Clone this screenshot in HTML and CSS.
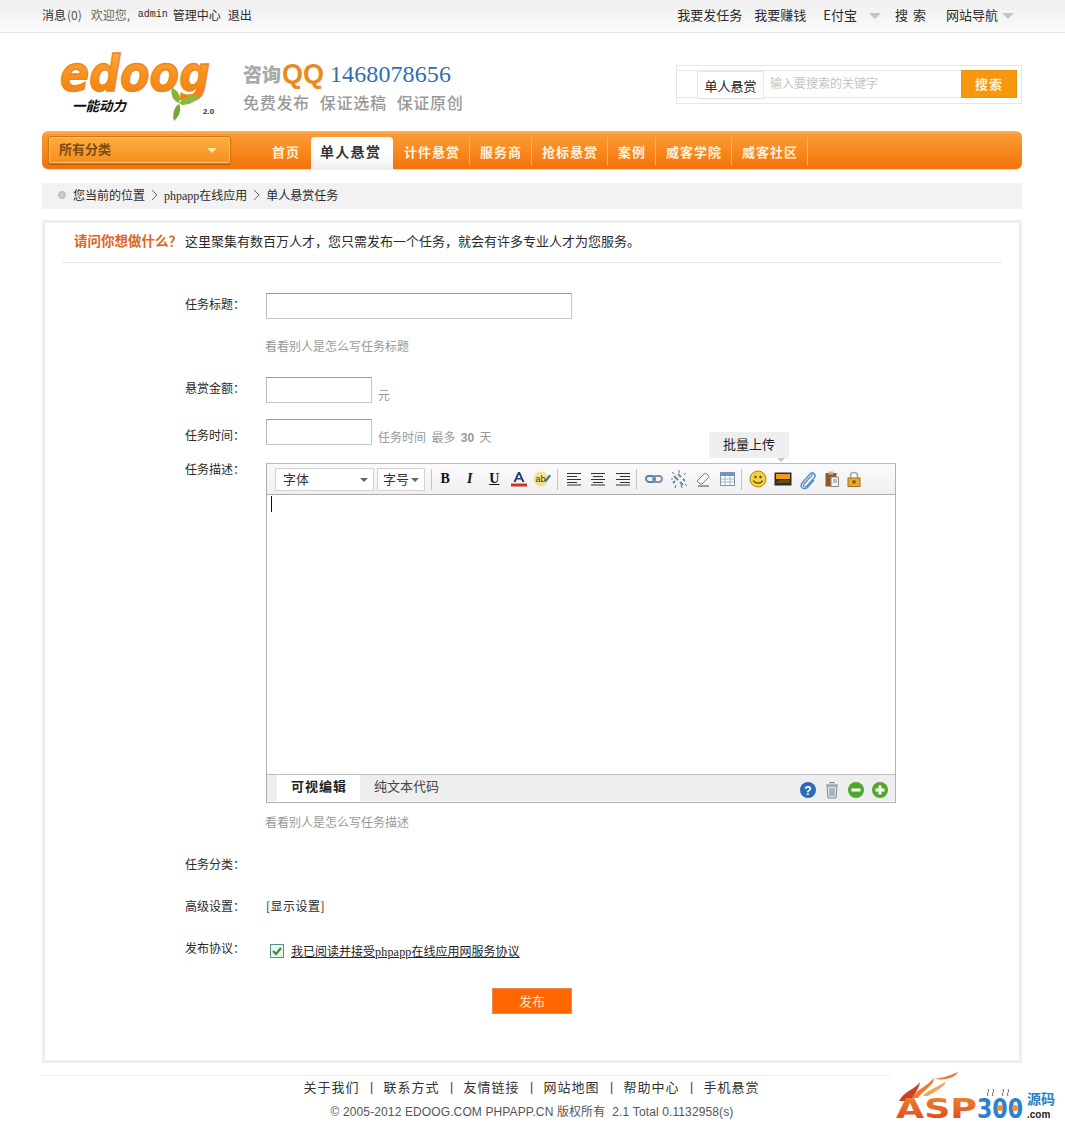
FILE: index.html
```html
<!DOCTYPE html>
<html lang="zh-CN">
<head>
<meta charset="utf-8">
<title>单人悬赏任务</title>
<link rel="stylesheet" href="styles.css">
</head>
<body>
<div class="topbar">
  <div class="wrap topbar-in">
    <div class="top-left">
      <a>消息</a><span class="num">(0)</span><span class="welcome">欢迎您,</span><span class="admin">admin</span><a>管理中心</a><a>退出</a>
    </div>
    <div class="top-right">
      <a class="t1">我要发任务</a><a class="t2">我要赚钱</a><a class="t3">E付宝</a><i class="tri t-a"></i><a class="t4">搜 索</a><a class="t5">网站导航</a><i class="tri t-b"></i>
    </div>
  </div>
</div>

<div class="wrap">
  <header class="header">
    <svg class="logo" width="166" height="72" viewBox="0 0 166 72" aria-label="edoog">
      <defs>
        <linearGradient id="lg" x1="0" y1="0" x2="0" y2="1">
          <stop offset="0" stop-color="#fdb04a"/>
          <stop offset=".55" stop-color="#f7901c"/>
          <stop offset="1" stop-color="#ef7c10"/>
        </linearGradient>
      </defs>
      <text x="1" y="41" class="logo-word" textLength="150" lengthAdjust="spacingAndGlyphs" fill="url(#lg)" stroke="#f0841a" stroke-width="1.400">edoog</text>
      <path d="M113 38c4 1 10 7 7 15-6-2-9-9-7-15z" fill="#82b33a"/>
      <path d="M120 53c5-6 12-8 20-8-2 6-9 10-17 10z" fill="#8abb42"/>
      <path d="M120 54c3 5 0 13-5 17-2-6 0-14 5-17z" fill="#74a632"/>
      <text x="13" y="61" class="logo-cn">一能动力</text>
      <text x="144" y="64" class="logo-ver">2.0</text>
    </svg>
    <div class="slogan">
      <div class="sl-1"><span class="sl-zx">咨询</span><span class="sl-qq">QQ</span><span class="sl-no">1468078656</span></div>
      <div class="sl-2"><span>免费发布</span><span>保证选稿</span><span>保证原创</span></div>
    </div>
    <div class="search">
      <div class="search-in">
        <span class="search-type">单人悬赏</span>
        <span class="search-input">输入要搜索的关键字</span>
        <span class="search-btn">搜索</span>
      </div>
    </div>
  </header>

  <nav class="nav">
    <div class="cat"><span>所有分类</span><i class="cat-arrow"></i></div>
    <ul class="menu">
      <li class="m-first"><a>首页</a></li>
      <li class="active"><a>单人悬赏</a></li>
      <li><a>计件悬赏</a></li>
      <li><a>服务商</a></li>
      <li><a>抢标悬赏</a></li>
      <li><a>案例</a></li>
      <li><a>威客学院</a></li>
      <li><a>威客社区</a></li>
    </ul>
  </nav>

  <div class="crumb">
    <i class="crumb-dot"></i><span class="crumb-0">您当前的位置</span>
    <svg class="crumb-sep" width="7" height="10" viewBox="0 0 7 10"><path d="M1 0l5 5-5 5" fill="none" stroke="#666"/></svg>
    <span><span class="mono">phpapp</span>在线应用</span>
    <svg class="crumb-sep" width="7" height="10" viewBox="0 0 7 10"><path d="M1 0l5 5-5 5" fill="none" stroke="#666"/></svg>
    <span>单人悬赏任务</span>
  </div>

  <main class="main">
    <div class="intro"><strong>请问你想做什么？</strong><span>这里聚集有数百万人才，您只需发布一个任务，就会有许多专业人才为您服务。</span></div>

    <div class="row row-title">
      <label class="lbl">任务标题：</label>
      <div class="input w-long"></div>
    </div>
    <div class="hint hint-1">看看别人是怎么写任务标题</div>

    <div class="row row-amount">
      <label class="lbl">悬赏金额：</label>
      <div class="input w-short"></div>
      <span class="after">元</span>
    </div>
    <div class="row row-time">
      <label class="lbl">任务时间：</label>
      <div class="input w-short"></div>
      <span class="after">任务时间&nbsp; 最多 &nbsp;<b class="num-b">30</b>&nbsp; 天</span>
    </div>

    <div class="row row-editor">
      <label class="lbl lbl-top">任务描述：</label>
      <div class="editor">
        <div class="tip">批量上传</div>
        <div class="toolbar">
          <div class="sel sel-font"><span>字体</span><i class="sel-arrow"></i></div>
          <div class="sel sel-size"><span>字号</span><i class="sel-arrow"></i></div>
          <i class="tb-sep tb-sep-1"></i>
          <span class="tb"><b class="tb-b">B</b></span>
          <span class="tb"><b class="tb-i">I</b></span>
          <span class="tb"><b class="tb-u">U</b></span>
          <span class="tb"><svg width="18" height="18" viewBox="0 0 18 18"><path d="M3.5 12L8 2h2l4.500 10h-2.200l-1-2.500H6.700l-1 2.500zM7.400 8h3.200L9 4.200z" fill="#1c3f78"/><rect x="1" y="13.500" width="16" height="3" fill="#d8311e"/></svg></span>
          <span class="tb"><svg width="20" height="18" viewBox="0 0 20 18"><circle cx="8" cy="9" r="7.500" fill="#f3e28a"/><text x="2.500" y="12" class="tb-ab">ab</text><path d="M13 12l5-6-1.500-1.500-5 6z" fill="#3a6ea5"/></svg></span>
          <i class="tb-sep"></i>
          <span class="tb"><svg width="16" height="14" viewBox="0 0 16 14"><path d="M1 1.500h14M1 4.500h10M1 7.500h14M1 10.500h10M1 13h14" stroke="#333"/></svg></span>
          <span class="tb"><svg width="16" height="14" viewBox="0 0 16 14"><path d="M1 1.500h14M3 4.500h10M1 7.500h14M3 10.500h10M1 13h14" stroke="#333"/></svg></span>
          <span class="tb"><svg width="16" height="14" viewBox="0 0 16 14"><path d="M1 1.500h14M5 4.500h10M1 7.500h14M5 10.500h10M1 13h14" stroke="#333"/></svg></span>
          <i class="tb-sep tb-sep-w"></i>
          <span class="tb"><svg width="18" height="12" viewBox="0 0 18 12"><rect x="1" y="3" width="9" height="6" rx="3" fill="none" stroke="#5d7fa8" stroke-width="1.800"/><rect x="8" y="3" width="9" height="6" rx="3" fill="none" stroke="#7d93ad" stroke-width="1.800"/></svg></span>
          <span class="tb"><svg width="18" height="18" viewBox="0 0 18 18"><path d="M4 6l4 4M10 12l3 3" stroke="#6d87a8" stroke-width="2.200" fill="none"/><path d="M8 4l3 3M13 9l2 2M5 11l-2 2" stroke="#6d87a8" stroke-width="1.800"/><path d="M9 0v3M2 2l2 2M16 3l-2 2M1 9h2M15 14l2 2M6 15l-1 3M11 15l1 3" stroke="#555" stroke-width=".8"/></svg></span>
          <span class="tb"><svg width="16" height="16" viewBox="0 0 16 16"><path d="M2 10l7-7c1-1 2-1 3 0l1 1c1 1 1 2 0 3l-6 6H5z" fill="#f4f6f8" stroke="#6a7c90"/><path d="M3 15h11" stroke="#445"/></svg></span>
          <span class="tb"><svg width="15" height="14" viewBox="0 0 15 14"><rect x=".5" y=".5" width="14" height="13" fill="#fff" stroke="#7b97b8"/><rect x="1" y="1" width="13" height="3" fill="#6d96c6"/><path d="M5 4v9M10 4v9M1 7h13M1 10h13" stroke="#9fb8d4"/></svg></span>
          <i class="tb-sep"></i>
          <span class="tb"><svg width="18" height="18" viewBox="0 0 18 18"><circle cx="9" cy="9" r="8" fill="#f5d23c" stroke="#a98a1e"/><circle cx="6.500" cy="7" r="1.200" fill="#5c4a10"/><circle cx="11.500" cy="7" r="1.200" fill="#5c4a10"/><path d="M4.500 10.500c1.500 3.500 7.500 3.500 9 0" fill="none" stroke="#5c4a10" stroke-width="1.200"/></svg></span>
          <span class="tb"><svg width="18" height="14" viewBox="0 0 18 14"><rect x=".5" y=".5" width="17" height="13" fill="#2c2c2c"/><rect x="2" y="2" width="14" height="5" fill="#f59a1e"/><path d="M2 10c4-3 9-3 14-2v3H2z" fill="#6b4a16"/></svg></span>
          <span class="tb"><svg width="18" height="20" viewBox="0 0 18 20"><path d="M15 5L6 15c-2 2 1 4 3 2l7-8c3-3-1-7-4-4l-8 9c-3 4 2 8 6 4l6-7" fill="none" stroke="#5d8fc6" stroke-width="1.400"/></svg></span>
          <span class="tb"><svg width="14" height="16" viewBox="0 0 14 16"><rect x=".5" y="2" width="11" height="13.500" fill="#8a5a2c"/><rect x="3.500" y=".5" width="5" height="3" fill="#c9b28a"/><path d="M6 6h7.500v9.500H6z" fill="#f3f3f3" stroke="#888"/><path d="M8 9h4M8 11h4" stroke="#888"/></svg></span>
          <span class="tb tb-lock"><svg width="14" height="16" viewBox="0 0 14 16"><path d="M3.500 7V4.500c0-4 7-4 7 0V7" fill="none" stroke="#a8a8a0" stroke-width="1.600"/><rect x="1" y="7" width="12" height="8.500" fill="#e8a83a" stroke="#a66f1a"/><rect x="5.500" y="9.500" width="3" height="3" fill="#7a4e10"/></svg></span>
        </div>
        <div class="edit-area"><i class="caret"></i></div>
        <div class="edit-bottom">
          <div class="tabs"><span class="tab tab-on">可视编辑</span><span class="tab">纯文本代码</span></div>
          <div class="ed-icons">
            <svg width="16" height="16" viewBox="0 0 16 16"><circle cx="8" cy="8" r="8" fill="#2a6cb8"/><text x="8" y="12.500" class="ic-q">?</text></svg>
            <svg class="ic-trash" width="14" height="18" viewBox="0 0 14 18"><path d="M1 4h12M5 3V1.500h4V3" fill="none" stroke="#7b8894"/><path d="M2 5h10l-1 12H3z" fill="#dde3e8" stroke="#7b8894"/><path d="M5 7l.3 8M7 7v8M9 7l-.3 8" stroke="#7b8894"/></svg>
            <svg width="16" height="16" viewBox="0 0 16 16"><circle cx="8" cy="8" r="8" fill="#4fa82c"/><rect x="3.500" y="6.500" width="9" height="3" fill="#fff"/></svg>
            <svg width="16" height="16" viewBox="0 0 16 16"><circle cx="8" cy="8" r="8" fill="#4fa82c"/><path d="M3.500 6.500h3v-3h3v3h3v3h-3v3h-3v-3h-3z" fill="#fff"/></svg>
          </div>
        </div>
      </div>
    </div>
    <div class="hint hint-2">看看别人是怎么写任务描述</div>

    <div class="row row-cat"><label class="lbl">任务分类：</label></div>
    <div class="row row-adv"><label class="lbl">高级设置：</label><span class="adv">[显示设置]</span></div>
    <div class="row row-agree">
      <label class="lbl">发布协议：</label>
      <div class="agree">
        <svg class="check" width="14" height="14" viewBox="0 0 14 14"><rect x=".5" y=".5" width="13" height="13" fill="#e8f2ee" stroke="#5b8f8a"/><path d="M3 7l3 3 5-6" fill="none" stroke="#2f8f2f" stroke-width="2"/></svg>
        <a>我已阅读并接受<span class="mono">phpapp</span>在线应用网服务协议</a>
      </div>
    </div>
    <div class="submit-row"><span class="submit">发布</span></div>
  </main>

  <footer class="footer">
    <div class="f-links"><a>关于我们</a><i>|</i><a>联系方式</a><i>|</i><a>友情链接</a><i>|</i><a>网站地图</a><i>|</i><a>帮助中心</a><i>|</i><a>手机悬赏</a></div>
    <div class="f-copy">© 2005-2012 EDOOG.COM PHPAPP.CN 版权所有 &nbsp;2.1 Total 0.1132958(s)</div>
  </footer>
</div>

<svg class="asp" width="175" height="53" viewBox="0 0 175 53" aria-label="ASP300">
  <defs>
    <linearGradient id="ag" x1="0" y1="0" x2="0" y2="1">
      <stop offset="0" stop-color="#f08a30"/>
      <stop offset="1" stop-color="#e0401c"/>
    </linearGradient>
  </defs>
  <path d="M9 30c5-10 15-11 21-19-1 7-6 12-9 19z" fill="#c9402a"/>
  <path d="M22 27c5-9 14-11 22-20 0 8-11 12-16 20z" fill="#ee7d34"/>
  <path d="M33 25c6-7 15-9 22-14 2 3-9 9-17 14z" fill="#f4a35a"/>
  <path d="M44 8c8-1 14-3 24-7-1 4-10 9-24 7z" fill="#ee7a34"/>
  <path d="M98 25c-2-3 2-4 0-7M103 25c-2-3 2-4 0-7M113 25c-2-3 2-4 0-7M118 25c-2-3 2-4 0-7" fill="none" stroke="#667" stroke-width="1"/>
  <text x="6" y="47" class="asp-a" textLength="81" lengthAdjust="spacingAndGlyphs">ASP</text>
  <text x="87" y="47" class="asp-b" textLength="46" lengthAdjust="spacingAndGlyphs">300</text>
  <circle cx="110" cy="37" r="3" fill="#f09030"/>
  <circle cx="125" cy="37" r="3" fill="#f09030"/>
  <text x="137" y="33" class="asp-c">源码</text>
  <text x="137" y="47" class="asp-d">.com</text>
</svg>
</body>
</html>
```

FILE: styles.css
```css
* { box-sizing: border-box; }
html, body { margin: 0; padding: 0; background: #fff; overflow: hidden; }
body {
  position: relative;
  height: 1124px;
  font: 12px/1.5 "Noto Sans CJK SC", "Liberation Sans", sans-serif;
  color: #2a2a2a;
}
i { font-style: normal; display: block; }
svg { overflow: visible; }
.wrap { width: 980px; margin-left: 42px; }
.mono { font-family: "Liberation Serif", serif; font-size: 12px; }

/* top bar */
.topbar {
  height: 33px;
  background: linear-gradient(#eeeeee, #fbfbfb);
  border-bottom: 1px solid #e2e2e2;
}
.topbar-in { display: flex; justify-content: space-between; height: 32px; line-height: 29px; }
.top-left { display: flex; }
.top-left .num { margin: 0 9px 0 1px; color: #555; }
.top-left .welcome { color: #666; width: 47px; }
.top-left .admin { font-family: "Liberation Mono", monospace; font-size: 10px; width: 35px; }
.top-left a + a { margin-left: 7px; }
.top-right { display: flex; align-items: center; font-size: 13px; padding-right: 8px; height: 29px; }
.top-right .t2 { margin-left: 12px; }
.top-right .t3 { margin-left: 17px; }
.top-right .t4 { margin-left: 14px; letter-spacing: 1px; width: 33px; white-space: nowrap; }
.top-right .t5 { margin-left: 18px; }
.tri { width: 0; height: 0; border: 5px solid transparent; border-top: 6px solid #bcc4cc; border-bottom: 0; margin-top: 2px; }
.t-a { margin-left: 12px; border-left-width: 6px; border-right-width: 6px; }
.t-b { margin-left: 4px; border-left-width: 6px; border-right-width: 6px; }

/* header */
.header { display: flex; height: 98px; position: relative; }
.logo { margin: 17px 0 0 17px; flex: none; }
.logo-word { font: oblique 700 50px "DejaVu Sans", sans-serif; }
.logo-cn { font: italic 700 13.500px "Noto Sans CJK SC", sans-serif; fill: #111; }
.logo-ver { font: 700 8px "Liberation Sans", sans-serif; fill: #333; }
.slogan { margin: 27px 0 0 18px; width: 260px; }
.sl-1 { display: flex; align-items: center; height: 28px; }
.sl-zx { font-size: 19px; font-weight: 900; color: #a9a9a9; }
.sl-qq { font: 700 27px "Liberation Sans", sans-serif; color: #ec8a20; margin: 0 6px 0 1px; width: 42px; }
.sl-no { font: 24px "Liberation Serif", serif; color: #2f6db3; letter-spacing: .1px; }
.sl-2 { display: flex; gap: 10px; font-size: 16px; color: #999; margin-top: 1px; font-weight: 500; letter-spacing: .7px; line-height: 26px; }
.search {
  position: absolute; right: 0; top: 32px;
  width: 346px; height: 39px;
  border: 1px solid #e6e6e6;
  padding: 4px 4px 4px 0;
}
.search-in { display: flex; height: 28px; border-top: 1px solid #e8e8e8; border-bottom: 1px solid #e8e8e8; }
.search-type {
  margin-left: 20px; width: 67px; height: 28px; background: #fff;
  border: 1px solid #e8e8e8; border-bottom-color: #ddd; line-height: 28px; text-align: center; color: #222; font-size: 13px;
}
.search-input { flex: 1; padding-left: 6px; color: #c4c4c4; line-height: 24px; }
.search-btn { width: 56px; margin-top: -1px; height: 28px; background: #f7960f; border: 1px solid #e6930f; color: #fff3d6; font-size: 13px; font-weight: 700; text-align: center; line-height: 26px; letter-spacing: 1px; }

/* nav */
.nav {
  height: 38px;
  display: flex;
  border-radius: 6px;
  background: linear-gradient(#fdb968 0, #fb9a38 3px, #f78a20 50%, #f2720d 100%);
  box-shadow: 0 1px 0 #d9e8ec;
  padding-left: 6px;
}
.cat {
  width: 183px; height: 28px; margin-top: 5px;
  display: flex; justify-content: space-between; align-items: center;
  padding: 0 13px 2px 10px;
  border: 1px solid #d0780f;
  border-radius: 3px;
  background: linear-gradient(#fcae44, #f68d1c);
  box-shadow: 0 1px 1px #b85c08, inset 0 0 0 1px #fcc26e;
  font-weight: 700; font-size: 13px; color: #7c4a10;
}
.cat-arrow { width: 0; height: 0; border: 5px solid transparent; border-top: 5px solid #ffe3a8; border-bottom: 0; margin-top: 2px; }
.menu { list-style: none; display: flex; margin: 0; padding: 0 0 0 30px; height: 38px; }
.menu li { position: relative; }
.menu a {
  display: block; margin-top: 6px; height: 28px;
  padding: 0 9px 0 10px; line-height: 30px;
  font-size: 13px; font-weight: 700; letter-spacing: 1px; color: #fff2dc;
  border-right: 1px solid #fbb56c;
  white-space: nowrap;
}
.menu .m-first a { padding: 0 11px 0 11px; border-right: 0; }
.menu .active { margin: 6px 1px -1px 0; height: 33px; width: 82px; background: linear-gradient(#fff 50%, #eee); border-radius: 4px 4px 0 0; }
.menu .active a { margin: 0; padding: 0 0 0 9px; border: 0; color: #333; font-size: 14px; height: 33px; line-height: 29px; letter-spacing: 1.300px; }

/* breadcrumb */
.crumb {
  margin-top: 14px; height: 26px;
  display: flex; align-items: center;
  background: #f2f2f2;
  padding: 0 0 2px 16px;
}
.crumb-dot { width: 8px; height: 8px; border-radius: 50%; background: #c9c9c9; border: 1px solid #b8b8b8; margin-right: 7px; }
.crumb-sep { margin: 0 6px; }

/* main box */
.main { margin-top: 11px; border: 3px solid #eeeeee; height: 843px; }
.intro {
  margin: 0 17px; height: 40px; padding: 7px 0 0 12px;
  border-bottom: 1px solid #e6e6e6;
  font-size: 13px; line-height: 20px; white-space: nowrap;
}
.intro strong { color: #e0651a; font-size: 13.500px; margin-right: 3px; font-family: "Noto Sans CJK TC", "Noto Sans CJK SC", sans-serif; }
.row { display: flex; padding-left: 140px; }
.lbl { width: 81px; flex: none; line-height: 22px; white-space: nowrap; font-family: "Noto Sans CJK TC", "Noto Sans CJK SC", sans-serif; }
.lbl-top { line-height: 11px; }
.input { height: 26px; background: #fff; border: 1px solid #c6c6c6; border-top-color: #999; border-left-color: #bbb; }
.w-long { width: 306px; }
.w-short { width: 106px; }
.after { margin: 7px 0 -3px 6px; height: 22px; color: #999; line-height: 22px; white-space: nowrap; }
.num-b { font-family: "Liberation Sans", sans-serif; }
.hint { padding-left: 220px; color: #999; line-height: 20px; }
.row-title { margin-top: 30px; }
.hint-1 { margin-top: 17px; }
.row-amount { margin-top: 21px; height: 26px; }
.row-time { margin-top: 16px; height: 26px; }
.row-time .lbl { padding-top: 5px; }
.row-editor { margin-top: 18px; }
.hint-2 { margin-top: 9px; }
.row-cat { margin-top: 21px; }
.row-adv { margin-top: 20px; }
.row-agree { margin-top: 20px; }
.adv { line-height: 22px; letter-spacing: .5px; }
.agree { display: flex; align-items: center; height: 22px; margin: 3px 0 0 4px; }
.agree a { text-decoration: underline; margin-left: 7px; color: #222; white-space: nowrap; }
.agree .mono { letter-spacing: .2px; }
.check { display: block; }
.submit-row { padding-left: 447px; margin-top: 26px; }
.submit { display: block; width: 80px; height: 26px; background: #ff6600; border: 1px solid #e48a52; color: #ffe6c8; text-align: center; line-height: 24px; font-size: 13px; }

/* editor */
.editor { position: relative; width: 630px; height: 340px; border: 1px solid #b0b0b0; border-top-color: #bbb; background: #fff; }
.tip {
  position: absolute; left: 442px; top: -32px;
  width: 80px; height: 26px;
  background: #efefef; color: #222; font-size: 13px; text-align: center; line-height: 24px;
}
.tip::after { content: ""; position: absolute; left: 68px; top: 26px; border: 4px solid transparent; border-top-color: #c8c8c8; border-bottom: 0; }
.toolbar {
  height: 31px; display: flex; align-items: center; padding-left: 8px;
  border-bottom: 1px solid #aeaeae;
  background: linear-gradient(#fafafa, #f0f0f0);
}
.sel { height: 23px; background: #fff; border: 1px solid #d2d2d2; display: flex; align-items: center; justify-content: space-between; font-size: 13px; color: #333; margin-right: 3px; flex: none; }
.sel-font { width: 99px; padding: 0 5px 0 7px; }
.sel-size { width: 48px; padding: 0 5px 0 5px; margin-right: 5px; }
.sel-arrow { width: 0; height: 0; border: 4px solid transparent; border-top: 4px solid #666; border-bottom: 0; margin-top: 2px; }
.tb-sep { width: 1px; height: 21px; background: #c4c4c4; margin: 0 4px 0 1px; flex: none; }
.tb-sep-1 { margin-right: 1px; }
.tb-sep-w { margin-right: 5px; }
.tb { width: 24.500px; height: 22px; display: flex; align-items: center; justify-content: center; flex: none; }
.tb-lock { margin-left: -2px; }
.tb svg { display: block; }
.tb b { font: 700 14px "Liberation Serif", serif; color: #111; }
.tb .tb-i { font-style: italic; }
.tb .tb-u { text-decoration: underline; }
.tb-ab { font: 9px "Liberation Sans", sans-serif; fill: #333; }
.edit-area { height: 279px; background: #fff; padding: 1px 0 0 4px; }
.caret { width: 1px; height: 16px; background: #111; }
.edit-bottom { height: 27px; display: flex; justify-content: space-between; background: #eeeeee; border-top: 1px solid #bdbdbd; padding-left: 10px; }
.tabs { display: flex; }
.tab { padding: 0 14px; font-size: 13px; line-height: 22px; color: #444; white-space: nowrap; }
.tab-on { width: 83px; height: 26px; background: #fff; font-weight: 700; color: #222; letter-spacing: 1px; }
.ed-icons { display: flex; align-items: center; gap: 8px; padding: 3px 7px 0 0; }
.ed-icons svg { display: block; }
.ed-icons .ic-trash { margin: 0 1px 0 1px; }
.ic-q { font: 700 12px "Liberation Sans", sans-serif; fill: #fff; text-anchor: middle; }

/* footer */
.footer { margin-top: 12px; border-top: 1px solid #eeeeee; text-align: center; }
.f-links { display: flex; justify-content: center; line-height: 22px; font-size: 13px; letter-spacing: 1px; color: #333; margin-left: -1px; }
.f-links i { width: 24px; text-align: center; font-family: "Liberation Sans", sans-serif; font-size: 12px; letter-spacing: 0; }
.f-copy { margin-top: 4px; line-height: 20px; font-family: "Liberation Sans", "Noto Sans CJK SC", sans-serif; color: #555; letter-spacing: .12px; }

/* watermark */
.asp { position: absolute; left: 890px; top: 1071px; background: #fff; display: block; }
.asp-a { font: 700 27px "DejaVu Sans", sans-serif; fill: url(#ag); }
.asp-b { font: 700 27px "DejaVu Sans", sans-serif; fill: #2d7fd0; }
.asp-c { font: 700 14px "Noto Sans CJK SC", sans-serif; fill: #2d7fc4; }
.asp-d { font: 700 10px "Liberation Sans", sans-serif; fill: #222; }
```
